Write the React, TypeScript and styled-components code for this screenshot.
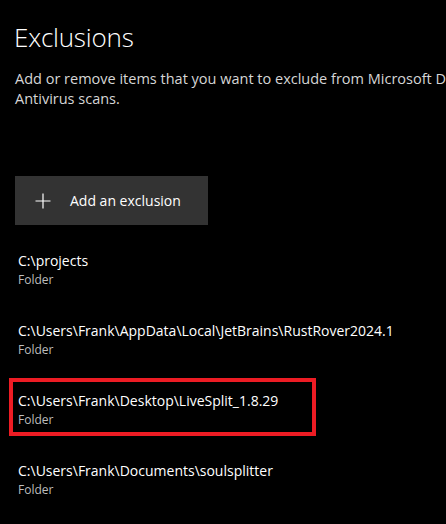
import React from "react";
import styled, { createGlobalStyle } from "styled-components";

const Global = createGlobalStyle`
  html, body {
    margin: 0;
    padding: 0;
    background: #000;
    overflow: hidden;
  }
  body {
    font-family: "Open Sans", "Noto Sans", sans-serif;
    color: #fff;
  }
`;

const Page = styled.div`
  width: 446px;
  height: 524px;
  background: #000;
  overflow: hidden;
  padding: 18px 0 0 14px;
  box-sizing: border-box;
`;

const Title = styled.h1`
  margin: 0;
  font-family: "Open Sans", sans-serif;
  font-weight: 300;
  font-size: 26px;
  line-height: 38px;
  color: #fff;
  letter-spacing: -0.2px;
`;

const Description = styled.p`
  margin: 13px 0 0 1px;
  font-size: 14.5px;
  line-height: 20px;
  color: #d6d6d6;
  white-space: nowrap;
`;

const AddButton = styled.button`
  margin: 67px 0 0 1px;
  width: 193px;
  height: 49px;
  background: #333333;
  border: none;
  display: flex;
  align-items: center;
  padding: 0 0 0 20px;
  gap: 19px;
  color: #fff;
  font-family: "Open Sans", sans-serif;
  font-size: 14px;
  cursor: pointer;
`;

const List = styled.ul`
  list-style: none;
  margin: 22px 0 0 0;
  padding: 0;
  display: flex;
  flex-direction: column;
  gap: 26px;
`;

const Item = styled.li`
  position: relative;
  padding: 4px 0 0 4px;
  height: 40px;
  box-sizing: content-box;
`;

const Highlight = styled.div`
  position: absolute;
  left: -5px;
  top: -9px;
  width: 299px;
  height: 50px;
  border: 4px solid #ed1c24;
`;

const Path = styled.div`
  font-size: 14px;
  line-height: 20px;
  color: #fff;
  white-space: nowrap;
`;

const Kind = styled.div`
  font-size: 12px;
  line-height: 17px;
  color: #bdbdbd;
`;

const PlusIcon = () => (
  <svg width="16" height="16" viewBox="0 0 16 16" aria-hidden>
    <path d="M8 0.5V15.5M0.5 8H15.5" stroke="#fff" strokeWidth="1.2" fill="none" />
  </svg>
);

const items = [
  { path: "C:\\projects", kind: "Folder" },
  { path: "C:\\Users\\Frank\\AppData\\Local\\JetBrains\\RustRover2024.1", kind: "Folder" },
  { path: "C:\\Users\\Frank\\Desktop\\LiveSplit_1.8.29", kind: "Folder", highlight: true },
  { path: "C:\\Users\\Frank\\Documents\\soulsplitter", kind: "Folder" },
];

export default function App() {
  return (
    <>
      <Global />
      <Page>
        <Title>Exclusions</Title>
        <Description>
          Add or remove items that you want to exclude from Microsoft Defender
          <br />
          Antivirus scans.
        </Description>
        <AddButton>
          <PlusIcon />
          <span>Add an exclusion</span>
        </AddButton>
        <List>
          {items.map((it) => (
            <Item key={it.path}>
              {it.highlight && <Highlight />}
              <Path>{it.path}</Path>
              <Kind>{it.kind}</Kind>
            </Item>
          ))}
        </List>
      </Page>
    </>
  );
}
